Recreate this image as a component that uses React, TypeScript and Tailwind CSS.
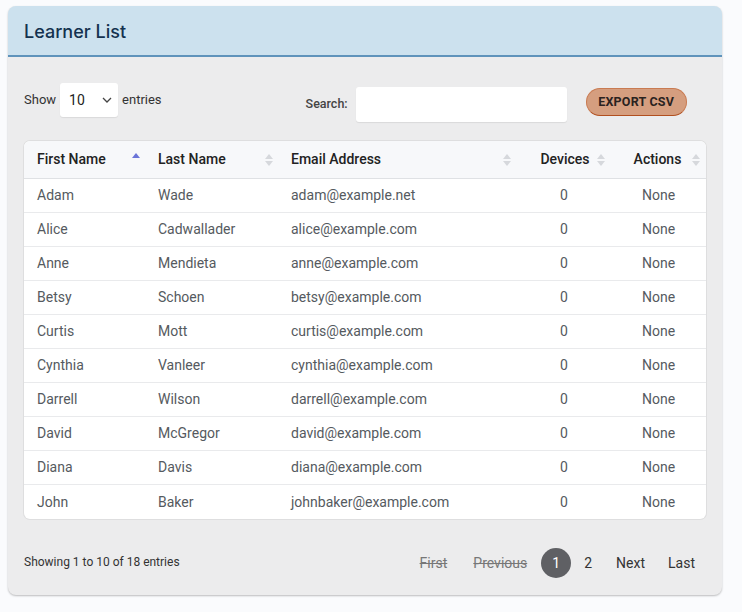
import React from "react";

const rows = [
  ["Adam", "Wade", "adam@example.net"],
  ["Alice", "Cadwallader", "alice@example.com"],
  ["Anne", "Mendieta", "anne@example.com"],
  ["Betsy", "Schoen", "betsy@example.com"],
  ["Curtis", "Mott", "curtis@example.com"],
  ["Cynthia", "Vanleer", "cynthia@example.com"],
  ["Darrell", "Wilson", "darrell@example.com"],
  ["David", "McGregor", "david@example.com"],
  ["Diana", "Davis", "diana@example.com"],
  ["John", "Baker", "johnbaker@example.com"],
];

function SortIcon({ active }: { active?: boolean }) {
  if (active) {
    return (
      <svg width="8" height="12" viewBox="0 0 8 12" className="absolute right-[6px] top-[11px]">
        <path d="M4 1 L8 6 L0 6 Z" fill="#6b74d8" />
      </svg>
    );
  }
  return (
    <svg width="8" height="14" viewBox="0 0 8 14" className="absolute right-[6px] top-[12px]">
      <path d="M4 1 L8 6 L0 6 Z" fill="#d6d8dc" />
      <path d="M4 13 L8 8 L0 8 Z" fill="#d6d8dc" />
    </svg>
  );
}

export default function App() {
  return (
    <div className="min-h-[612px] bg-[#fafbfd] pt-[6px] pl-[8px] pr-[20px]" style={{ fontFamily: "Roboto, 'Liberation Sans', sans-serif" }}>
      <div className="w-[714px] rounded-[8px] bg-[#ececed] shadow-[0_1px_2px_rgba(0,0,0,0.25)] overflow-hidden">
        <div className="h-[51px] bg-[#cce1ee] border-b-2 border-[#5f93bb] flex items-center pl-[16px]">
          <h1 className="text-[18px] font-medium text-[#14324f] mt-[2px]" style={{ fontFamily: "Inter, Roboto, sans-serif" }}>Learner List</h1>
        </div>
        <div className="px-[16px] pt-[26px] pb-[17px]">
          <div className="flex items-start h-[58px]">
            <div className="flex items-center text-[13px] text-[#333] h-[34px]">
              <span>Show</span>
              <div className="ml-[4px] w-[58px] h-[34px] bg-white rounded-[3px] shadow-[0_1px_1px_rgba(0,0,0,0.08)] flex items-center justify-between pl-[9px] pr-[6px] text-[14px] text-[#222]">
                <span>10</span>
                <svg width="10" height="6" viewBox="0 0 10 6"><path d="M1 1 L5 5 L9 1" stroke="#444" strokeWidth="1.3" fill="none" /></svg>
              </div>
              <span className="ml-[4px]">entries</span>
            </div>
            <div className="flex items-center ml-[144px] mt-[4px]">
              <span className="text-[12.5px] font-medium text-[#444] mr-[8px]">Search:</span>
              <div className="w-[211px] h-[35px] bg-white rounded-[3px] shadow-[0_1px_1px_rgba(0,0,0,0.08)]" />
            </div>
            <button className="ml-[19px] mt-[5px] w-[101px] h-[28px] rounded-full bg-[#d59e7f] border border-[#c97b52] border-b-[#b14f1f] text-[12.5px] font-bold text-[#2a2220] tracking-[0.2px]">
              EXPORT CSV
            </button>
          </div>
          <div className="bg-white rounded-[6px] shadow-[0_0_0_1px_rgba(0,0,0,0.06)] overflow-hidden">
            <div className="grid grid-cols-[122px_133px_238px_94px_95px] h-[38px] bg-[#f7f8fa] border-b border-[#dfe1e4] text-[14px] font-medium text-[#222] items-center">
              <div className="relative pl-[13px] h-full flex items-center">First Name<SortIcon active /></div>
              <div className="relative pl-[12px] h-full flex items-center">Last Name<SortIcon /></div>
              <div className="relative pl-[12px] h-full flex items-center">Email Address<SortIcon /></div>
              <div className="relative h-full flex items-center justify-center pl-[2px]">Devices<SortIcon /></div>
              <div className="relative h-full flex items-center justify-center pr-[2px]">Actions<SortIcon /></div>
            </div>
            {rows.map((r, i) => (
              <div key={i} className={`grid grid-cols-[122px_133px_238px_94px_95px] h-[34px] items-center text-[14px] text-[#555a60] ${i < rows.length - 1 ? "border-b border-[#e9eaec]" : ""}`}>
                <div className="pl-[13px]">{r[0]}</div>
                <div className="pl-[12px]">{r[1]}</div>
                <div className="pl-[12px]">{r[2]}</div>
                <div className="text-center">0</div>
                <div className="text-center">None</div>
              </div>
            ))}
          </div>
          <div className="flex items-center justify-between mt-[29px] h-[30px]">
            <span className="text-[12px] text-[#333] -mt-[3px]">Showing 1 to 10 of 18 entries</span>
            <div className="flex items-center text-[14px] mr-[11px]">
              <span className="line-through text-[#777] mr-[26px]">First</span>
              <span className="line-through text-[#777] mr-[14px]">Previous</span>
              <span className="w-[30px] h-[30px] rounded-full bg-[#5f6064] text-white flex items-center justify-center mr-[13px]">1</span>
              <span className="text-[#333] mr-[24px]">2</span>
              <span className="text-[#333] mr-[23px]">Next</span>
              <span className="text-[#333]">Last</span>
            </div>
          </div>
        </div>
      </div>
    </div>
  );
}
